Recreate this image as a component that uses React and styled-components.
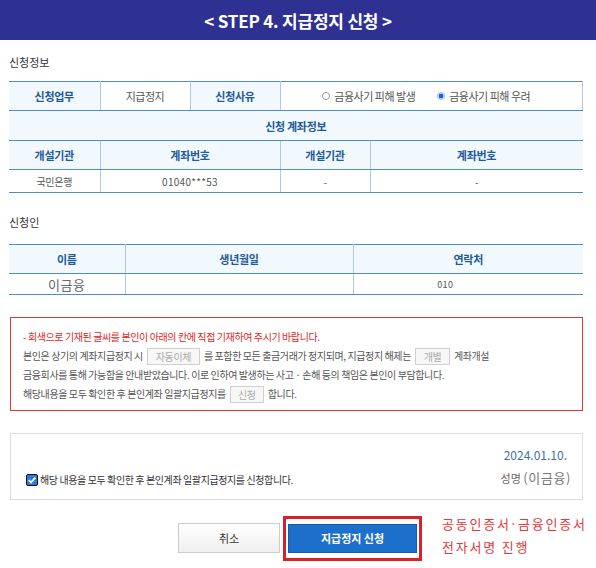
import React from 'react';
import styled, { createGlobalStyle } from 'styled-components';

const GlobalStyle = createGlobalStyle`
    body {
        margin: 0;
        background: #fff;
        font-family: "Noto Sans CJK KR", "Noto Sans", sans-serif;
    }
`;

const Page = styled.div`
    width: 596px;
    padding-bottom: 8px;
`;

const Header = styled.h1`
    margin: 0;
    height: 40px;
    display: flex;
    align-items: center;
    justify-content: center;
    background: #2e3192;
    color: #fff;
    font-size: 17px;
    font-weight: 700;
    letter-spacing: -0.2px;
`;

const Body = styled.div`
    padding: 0 13px 0 9px;
`;

const SectionTitle = styled.h2`
    margin: ${ p => p.$top }px 0 ${ p => p.$bottom }px;
    font-size: 11px;
    font-weight: 400;
    line-height: 14px;
    color: #333;
`;

const Table = styled.table`
    width: 100%;
    table-layout: fixed;
    border-collapse: collapse;
    border-top: 1px solid #4d8ec4;
`;

const Row = styled.tr`
    height: ${ p => p.$h }px;
`;

const Th = styled.th`
    padding: 0;
    background: #f1f8fe;
    color: #1f5a99;
    font-size: 11px;
    font-weight: 700;
    letter-spacing: -0.3px;
    text-align: center;
    border-bottom: 1px solid #4d8ec4;
    border-left: 1px solid #a9cbe7;
    &:first-child { border-left: 0; }
`;

const Td = styled.td`
    padding: 0 ${ p => p.$padRight || 0 }px 0 0;
    color: ${ p => p.$tone || '#555' };
    font-size: ${ p => p.$size || 10 }px;
    letter-spacing: ${ p => p.$spacing ?? -0.3 }px;
    text-align: center;
    border-bottom: 1px solid #4d8ec4;
    border-left: 1px solid #a9cbe7;
    border-right: ${ p => p.$edge ? '1px solid #a9cbe7' : '0' };
    &:first-child { border-left: 0; }
`;

const RadioGroup = styled.div`
    display: flex;
    justify-content: center;
    gap: 22px;
    padding-right: 10px;
`;

const RadioLabel = styled.label`
    display: inline-flex;
    align-items: center;
    gap: 4px;
    font-size: 11px;
    letter-spacing: -0.5px;
`;

const RadioDot = styled.span`
    width: 8px;
    height: 8px;
    box-sizing: border-box;
    border-radius: 50%;
    border: 1px solid ${ p => p.$on ? '#9cc4ef' : '#9a9a9a' };
    background: ${ p => p.$on ? 'radial-gradient(circle, #1e64d8 0 2.2px, #cfe3fb 2.6px)' : '#fff' };
`;

const Notice = styled.div`
    margin: 22px 0 0 1px;
    padding: 9px 12px 7px;
    border: 1px solid #d83a2f;
    color: #555;
    font-size: 10px;
    line-height: 19px;
    letter-spacing: -0.4px;
`;

const NoticeLine = styled.div`
    color: ${ p => p.$alert ? '#e0261b' : '#555' };
    white-space: nowrap;
`;

const Blank = styled.span`
    display: inline-block;
    vertical-align: middle;
    box-sizing: border-box;
    width: ${ p => p.$w }px;
    height: 17px;
    margin: -2px 4px 0;
    border: 1px solid #cfcfcf;
    background: #f7f7f7;
    color: #aaa;
    line-height: 15px;
    text-align: center;
`;

const InfoBox = styled.div`
    margin: 22px 0 0 1px;
    height: 67px;
    box-sizing: border-box;
    padding: 11px 11px 9px 15px;
    display: flex;
    align-items: flex-end;
    justify-content: space-between;
    border: 1px solid #ddd;
`;

const AgreeLabel = styled.label`
    display: flex;
    align-items: center;
    gap: 2px;
    margin-bottom: 3px;
    color: #333;
    font-size: 10px;
    letter-spacing: -0.4px;
`;

const CheckBox = styled.span`
    width: 12px;
    height: 12px;
    box-sizing: border-box;
    display: inline-flex;
    align-items: center;
    justify-content: center;
    border: 1px solid #111;
    border-radius: 2px;
    background: #2b78e0;
`;

const SignBlock = styled.div`
    display: flex;
    flex-direction: column;
    align-items: flex-end;
`;

const SignDate = styled.div`
    margin-right: 4px;
    color: #3d6ea8;
    font-size: 12px;
    line-height: 22px;
`;

const SignName = styled.div`
    color: #666;
    font-size: 11px;
    line-height: 24px;
    span {
        font-size: 13px;
        color: #777;
        letter-spacing: 0.6px;
    }
`;

const ButtonRow = styled.div`
    margin-top: 23px;
    padding-left: 3px;
    display: flex;
    align-items: center;
    justify-content: center;
    gap: 8px;
`;

const CancelButton = styled.button`
    width: 102px;
    height: 30px;
    border: 1px solid #ccc;
    background: linear-gradient(#fff, #efefef);
    color: #333;
    font-family: inherit;
    font-size: 11px;
`;

const Highlight = styled.div`
    position: relative;
    display: flex;
    &::after {
        content: '';
        position: absolute;
        inset: -8px -5px;
        border: 3px solid #d9202b;
        pointer-events: none;
    }
`;

const PrimaryButton = styled.button`
    width: 129px;
    height: 29px;
    border: 1px solid #1759a6;
    background: #1c6fca;
    color: #fff;
    font-family: inherit;
    font-size: 11px;
    font-weight: 700;
`;

const Annotation = styled.div`
    position: absolute;
    left: calc(100% + 25px);
    top: -12px;
    white-space: nowrap;
    color: #e2383a;
    font-size: 13px;
    line-height: 23px;
    letter-spacing: 1.8px;
`;

const MidDot = styled.span`
    display: inline-block;
    margin: 0 -1px;
`;

const Check = () => (
    <svg width="10" height="10" viewBox="0 0 10 10">
        <path d="M1.8 5.2 L4 7.4 L8.3 2.6" fill="none" stroke="#fff" strokeWidth="1.8" />
    </svg>
);

const App = () => (
    <Page>
        <GlobalStyle />
        <Header>&lt; STEP 4. 지급정지 신청 &gt;</Header>
        <Body>
            <SectionTitle $top={ 15 } $bottom={ 12 }>신청정보</SectionTitle>
            <Table>
                <colgroup>
                    <col style={{ width: 91 }} />
                    <col style={{ width: 90 }} />
                    <col style={{ width: 90 }} />
                    <col style={{ width: 90 }} />
                    <col />
                </colgroup>
                <tbody>
                    <Row $h={ 29 }>
                        <Th>신청업무</Th>
                        <Td $size={ 11 } $spacing={ -0.5 }>지급정지</Td>
                        <Th>신청사유</Th>
                        <Td colSpan={ 2 } $edge>
                            <RadioGroup>
                                <RadioLabel><RadioDot />금융사기 피해 발생</RadioLabel>
                                <RadioLabel><RadioDot $on />금융사기 피해 우려</RadioLabel>
                            </RadioGroup>
                        </Td>
                    </Row>
                    <Row $h={ 30 }>
                        <Th colSpan={ 5 }>신청 계좌정보</Th>
                    </Row>
                    <Row $h={ 29 }>
                        <Th>개설기관</Th>
                        <Th colSpan={ 2 }>계좌번호</Th>
                        <Th>개설기관</Th>
                        <Th>계좌번호</Th>
                    </Row>
                    <Row $h={ 23 }>
                        <Td>국민은행</Td>
                        <Td colSpan={ 2 } $spacing={ 0.3 }>01040***53</Td>
                        <Td>-</Td>
                        <Td>-</Td>
                    </Row>
                </tbody>
            </Table>

            <SectionTitle $top={ 22 } $bottom={ 15 }>신청인</SectionTitle>
            <Table>
                <colgroup>
                    <col style={{ width: 116 }} />
                    <col style={{ width: 228 }} />
                    <col />
                </colgroup>
                <tbody>
                    <Row $h={ 29 }>
                        <Th>이름</Th>
                        <Th>생년월일</Th>
                        <Th>연락처</Th>
                    </Row>
                    <Row $h={ 21 }>
                        <Td $size={ 13 } $spacing={ 0.6 } $tone="#666">이금융</Td>
                        <Td />
                        <Td $size={ 9 } $spacing={ 0.3 } $padRight={ 46 }>010</Td>
                    </Row>
                </tbody>
            </Table>

            <Notice>
                <NoticeLine $alert>- 회색으로 기재된 글씨를 본인이 아래의 칸에 직접 기재하여 주시기 바랍니다.</NoticeLine>
                <NoticeLine>
                    본인은 상기의 계좌지급정지 시<Blank $w={ 53 }>자동이체</Blank>를 포함한 모든 출금거래가 정지되며, 지급정지 해제는<Blank $w={ 35 }>개별</Blank>계좌개설
                </NoticeLine>
                <NoticeLine>금융회사를 통해 가능함을 안내받았습니다. 이로 인하여 발생하는 사고 · 손해 등의 책임은 본인이 부담합니다.</NoticeLine>
                <NoticeLine>
                    해당내용을 모두 확인한 후 본인계좌 일괄지급정지를<Blank $w={ 34 }>신청</Blank>합니다.
                </NoticeLine>
            </Notice>

            <InfoBox>
                <AgreeLabel>
                    <CheckBox><Check /></CheckBox>
                    해당 내용을 모두 확인한 후 본인계좌 일괄지급정지를 신청합니다.
                </AgreeLabel>
                <SignBlock>
                    <SignDate>2024.01.10.</SignDate>
                    <SignName>성명 <span>(이금융)</span></SignName>
                </SignBlock>
            </InfoBox>

            <ButtonRow>
                <CancelButton type="button">취소</CancelButton>
                <Highlight>
                    <PrimaryButton type="button">지급정지 신청</PrimaryButton>
                    <Annotation>공동인증서<MidDot>·</MidDot>금융인증서<br />전자서명 진행</Annotation>
                </Highlight>
            </ButtonRow>
        </Body>
    </Page>
);

export default App;
